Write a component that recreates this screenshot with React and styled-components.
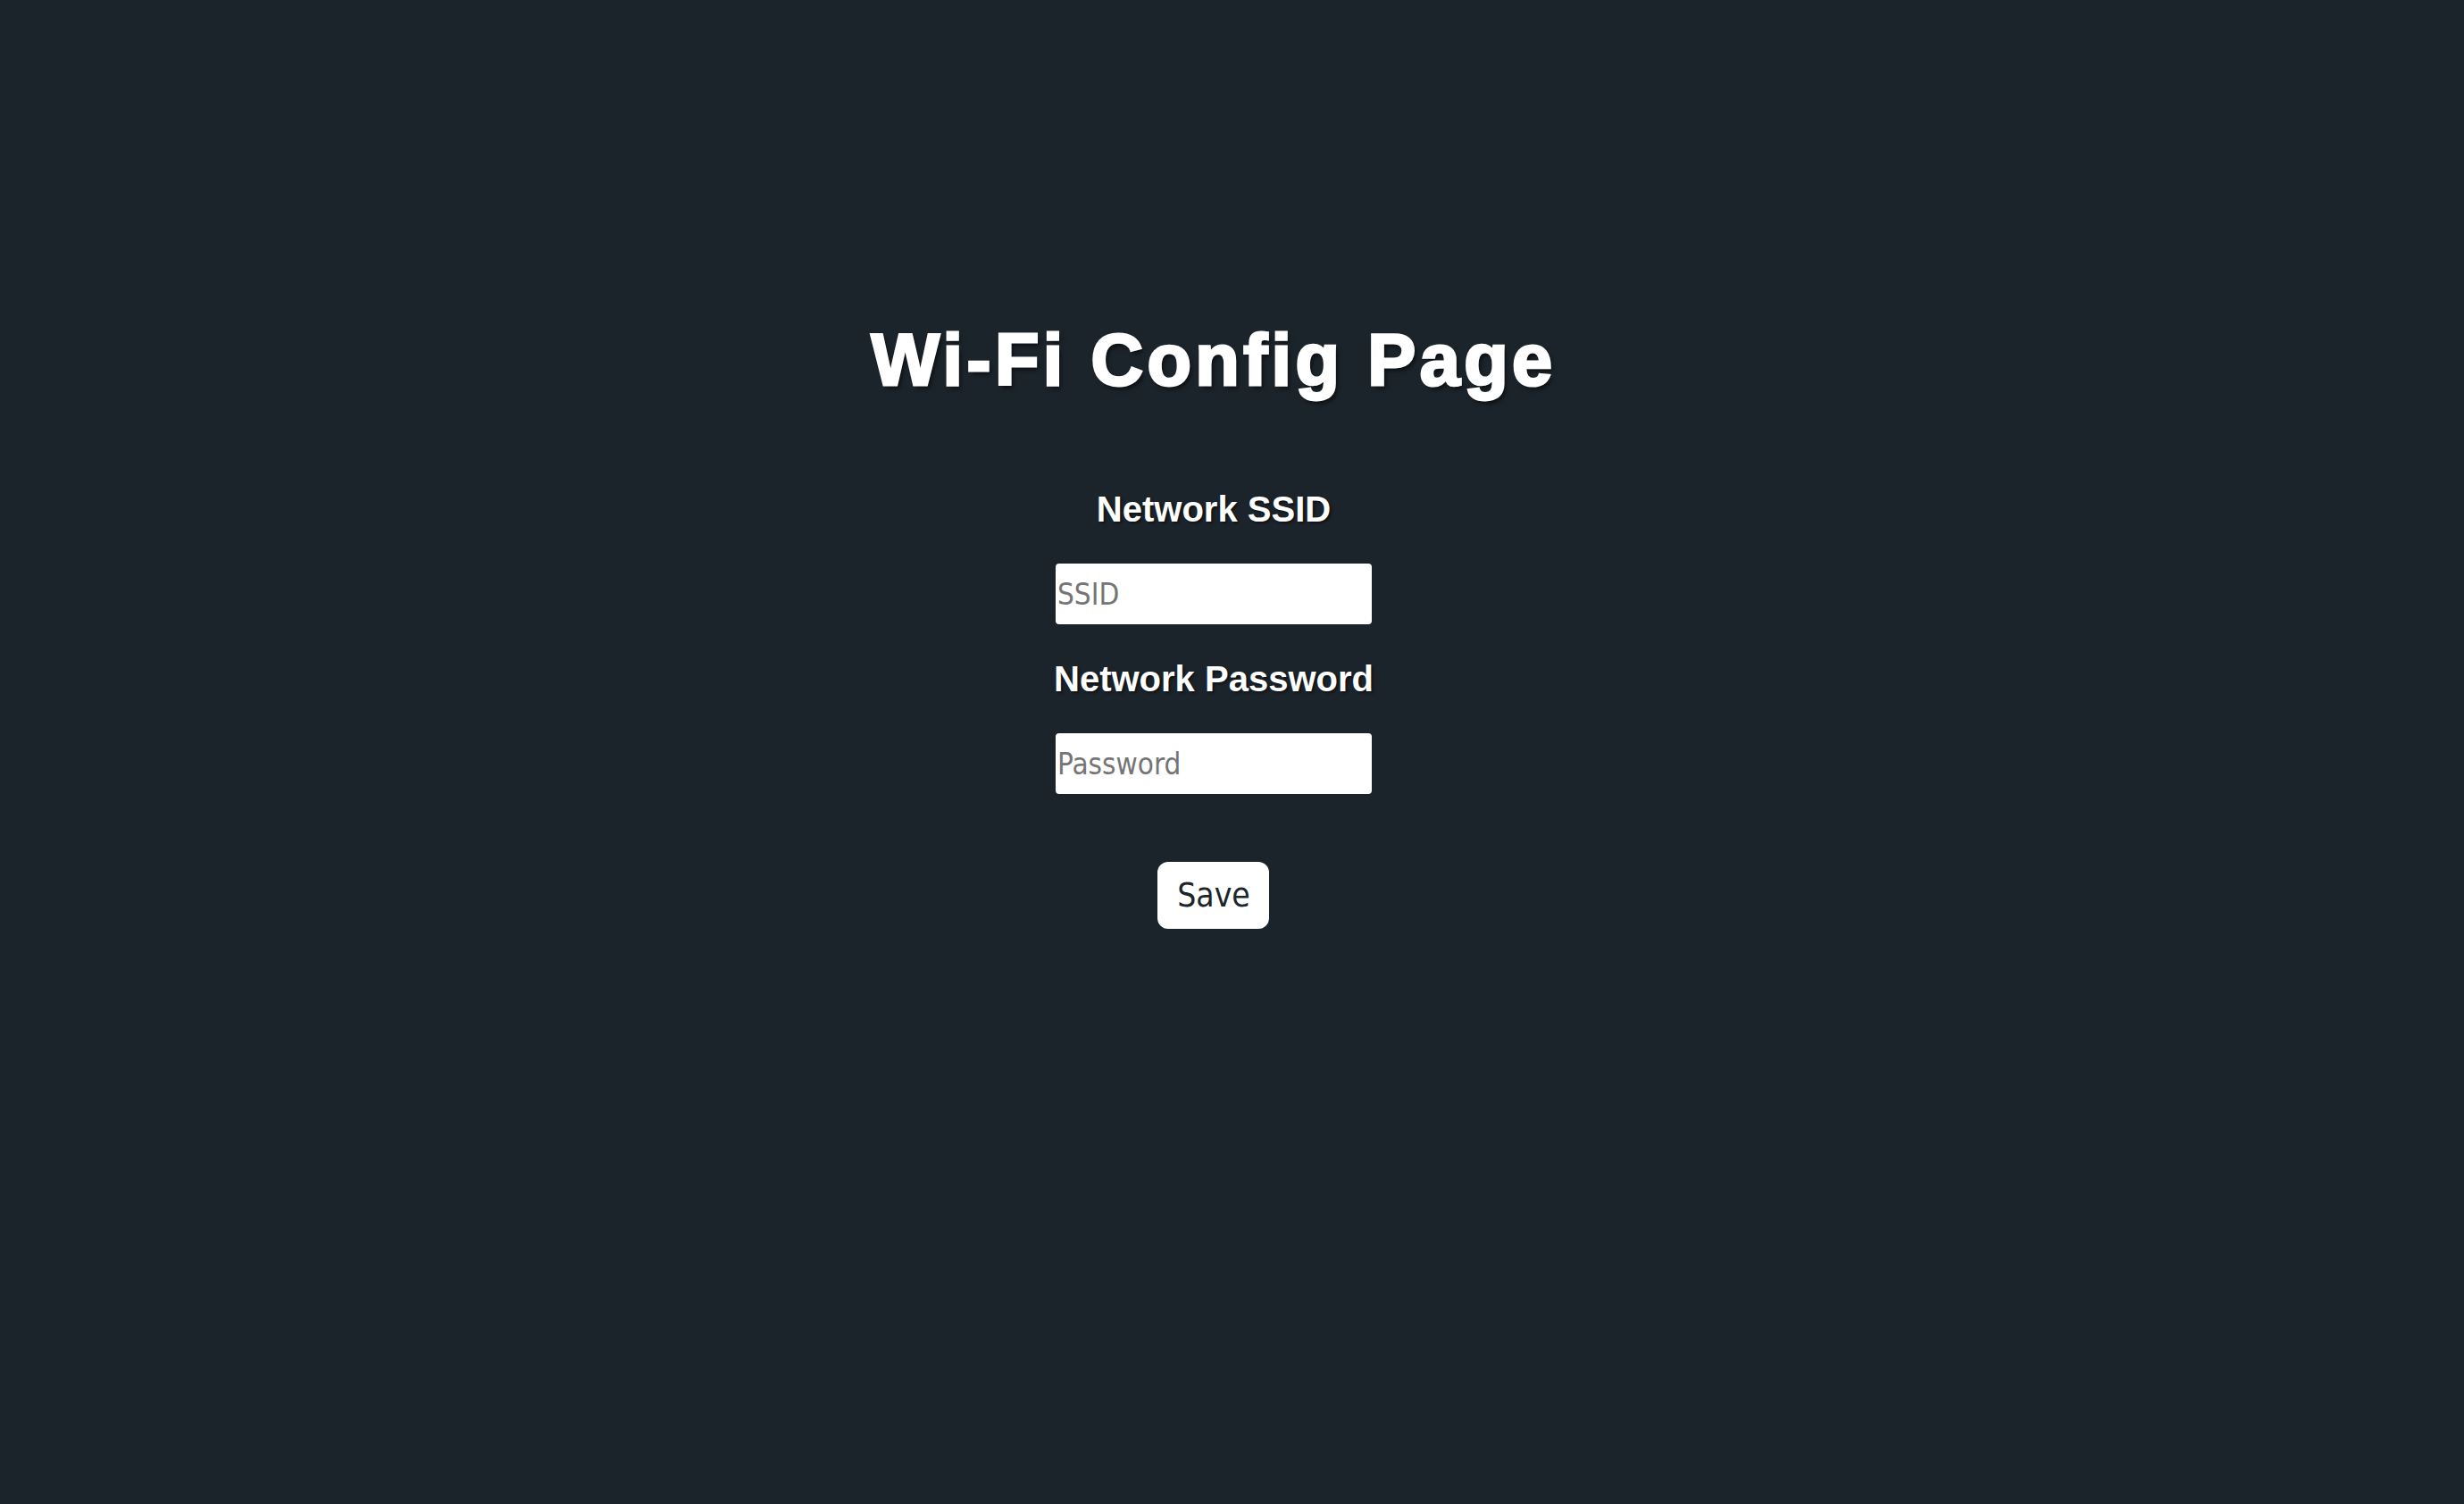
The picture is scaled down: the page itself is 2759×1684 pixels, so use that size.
import React from 'react'
import styled, { createGlobalStyle } from 'styled-components'

const GlobalStyle = createGlobalStyle`
  html, body {
    margin: 0;
    padding: 0;
    background: #1c242b;
  }
`

const WifiConfig = () =>
  <S.Page>
    <GlobalStyle />
    <S.Title>Wi-Fi Config Page</S.Title>
    <S.Form onSubmit={e => e.preventDefault()}>
      <S.Label htmlFor='ssid'>Network SSID</S.Label>
      <S.Input id='ssid' type='text' placeholder='SSID' />
      <S.Label htmlFor='password' spaced>Network Password</S.Label>
      <S.Input id='password' type='password' placeholder='Password' />
      <S.Button type='submit'>Save</S.Button>
    </S.Form>
  </S.Page>

const S = {
  Page: styled.div`
    display: flex;
    flex-direction: column;
    align-items: center;
    box-sizing: border-box;
    min-height: 100vh;
    padding: 363px 41px 0 0;
  `,
  Title: styled.h1`
    margin: 0;
    font-family: "Liberation Sans", Arial, sans-serif;
    font-size: 81px;
    font-weight: 700;
    line-height: 81px;
    letter-spacing: 4.4px;
    color: #fff;
    -webkit-text-stroke: 3px #fff;
    text-shadow: 3px 4px 5px rgba(0, 0, 0, 0.6);
  `,
  Form: styled.form`
    display: flex;
    flex-direction: column;
    align-items: center;
    margin-top: 106px;
  `,
  Label: styled.label`
    display: block;
    margin-top: ${props => props.spaced ? '41px' : '0'};
    font-family: "Liberation Sans", Arial, sans-serif;
    font-size: 40px;
    font-weight: 700;
    line-height: 40px;
    color: #fff;
    text-shadow: 2px 2px 3px rgba(0, 0, 0, 0.5);
  `,
  Input: styled.input`
    box-sizing: border-box;
    width: 354px;
    height: 68px;
    margin-top: 41px;
    padding: 0 2px;
    font-family: "DejaVu Sans Condensed", "DejaVu Sans", sans-serif;
    font-size: 33px;
    color: #222;
    background: #fff;
    border: none;
    border-radius: 4px;
    outline: none;

    &::placeholder {
      color: #757575;
    }
  `,
  Button: styled.button`
    box-sizing: border-box;
    width: 125px;
    height: 75px;
    margin-top: 76px;
    padding: 0;
    font-family: "DejaVu Sans Condensed", "DejaVu Sans", sans-serif;
    font-size: 37px;
    color: #1c252c;
    background: #fff;
    border: none;
    border-radius: 12px;
    cursor: pointer;
  `
}

export default WifiConfig
